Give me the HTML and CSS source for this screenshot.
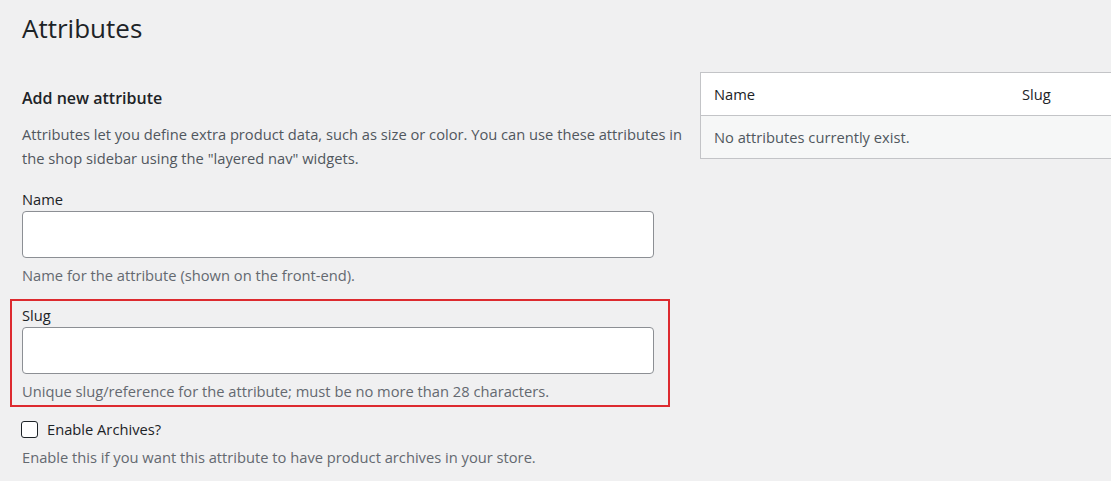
FILE: index.html
```html
<!DOCTYPE html>
<html lang="en">
<head>
<meta charset="utf-8">
<title>Attributes</title>
<link rel="stylesheet" href="styles.css">
</head>
<body>
<div class="wrap">
  <h1 class="page-title">Attributes</h1>
  <div class="columns">
    <div class="col-left">
      <h2 class="section-title">Add new attribute</h2>
      <p class="intro">Attributes let you define extra product data, such as size or color. You can use these attributes in the shop sidebar using the "layered nav" widgets.</p>
      <div class="field">
        <label class="field-label" for="attr-name">Name</label>
        <input class="text-input" id="attr-name" type="text">
        <p class="help">Name for the attribute (shown on the front-end).</p>
      </div>
      <div class="field field-highlight">
        <label class="field-label" for="attr-slug">Slug</label>
        <input class="text-input" id="attr-slug" type="text">
        <p class="help">Unique slug/reference for the attribute; must be no more than 28 characters.</p>
      </div>
      <div class="field field-check">
        <label class="check-row"><span class="checkbox"></span><span>Enable Archives?</span></label>
        <p class="help help-check">Enable this if you want this attribute to have product archives in your store.</p>
      </div>
    </div>
    <div class="col-right">
      <table class="attr-table">
        <thead>
          <tr><th class="th-name">Name</th><th class="th-slug">Slug</th></tr>
        </thead>
        <tbody>
          <tr><td colspan="2">No attributes currently exist.</td></tr>
        </tbody>
      </table>
    </div>
  </div>
</div>
</body>
</html>
```

FILE: styles.css
```css
html, body {
  margin: 0;
  padding: 0;
  background: #f0f0f1;
}
body {
  font-family: "Open Sans", "Noto Sans", sans-serif;
  font-size: 14.7px;
  color: #1d2327;
  overflow: hidden;
}
.wrap {
  padding-left: 22px;
}
.page-title {
  margin: 0;
  padding-top: 10px;
  font-size: 26px;
  font-weight: 400;
  line-height: 36px;
  color: #1d2327;
}
.columns {
  display: flex;
  gap: 13px;
  margin-top: 26px;
}
.col-left {
  width: 665px;
  flex: none;
}
.col-right {
  flex: 1;
  min-width: 440px;
}
.section-title {
  margin: 0;
  padding-top: 15px;
  font-size: 16px;
  font-weight: 600;
  line-height: 22px;
}
.intro {
  margin: 13px 0 0;
  line-height: 24px;
  color: #50575e;
}
.field {
  margin-top: 18px;
}
.field-label {
  display: block;
  line-height: 22px;
  color: #1d2327;
}
.text-input {
  display: block;
  box-sizing: border-box;
  width: 632px;
  height: 47px;
  margin: 1px 0 0;
  border: 1px solid #8c8f94;
  border-radius: 4px;
  background: #fff;
  padding: 0 8px;
  font: inherit;
}
.help {
  margin: 6px 0 0;
  line-height: 22px;
  color: #646970;
}
.field-highlight {
  margin: 13px 0 0 -12px;
  width: 660px;
  box-sizing: border-box;
  border: 2px solid #dd2a2f;
  padding: 3px 0 3px 10px;
}
.field-check {
  margin-top: 11px;
}
.check-row {
  display: flex;
  align-items: center;
  gap: 9px;
  line-height: 22px;
  color: #1d2327;
}
.checkbox {
  width: 17px;
  height: 17px;
  box-sizing: border-box;
  border: 1px solid #1d2327;
  border-radius: 3px;
  background: #fff;
  margin-left: -1px;
}
.help-check {
  margin-top: 6px;
}
.attr-table {
  width: 100%;
  min-width: 440px;
  border-collapse: collapse;
  border: 1px solid #c3c4c7;
  background: #fff;
}
.attr-table th {
  text-align: left;
  font-weight: 400;
  height: 42px;
  padding: 0 0 0 13px;
  color: #1d2327;
  border-bottom: 1px solid #c3c4c7;
}
.attr-table th.th-slug {
  width: 117px;
  padding-left: 0;
}
.attr-table td {
  height: 42px;
  padding: 0 0 0 13px;
  background: #f6f7f7;
  color: #50575e;
}
```
